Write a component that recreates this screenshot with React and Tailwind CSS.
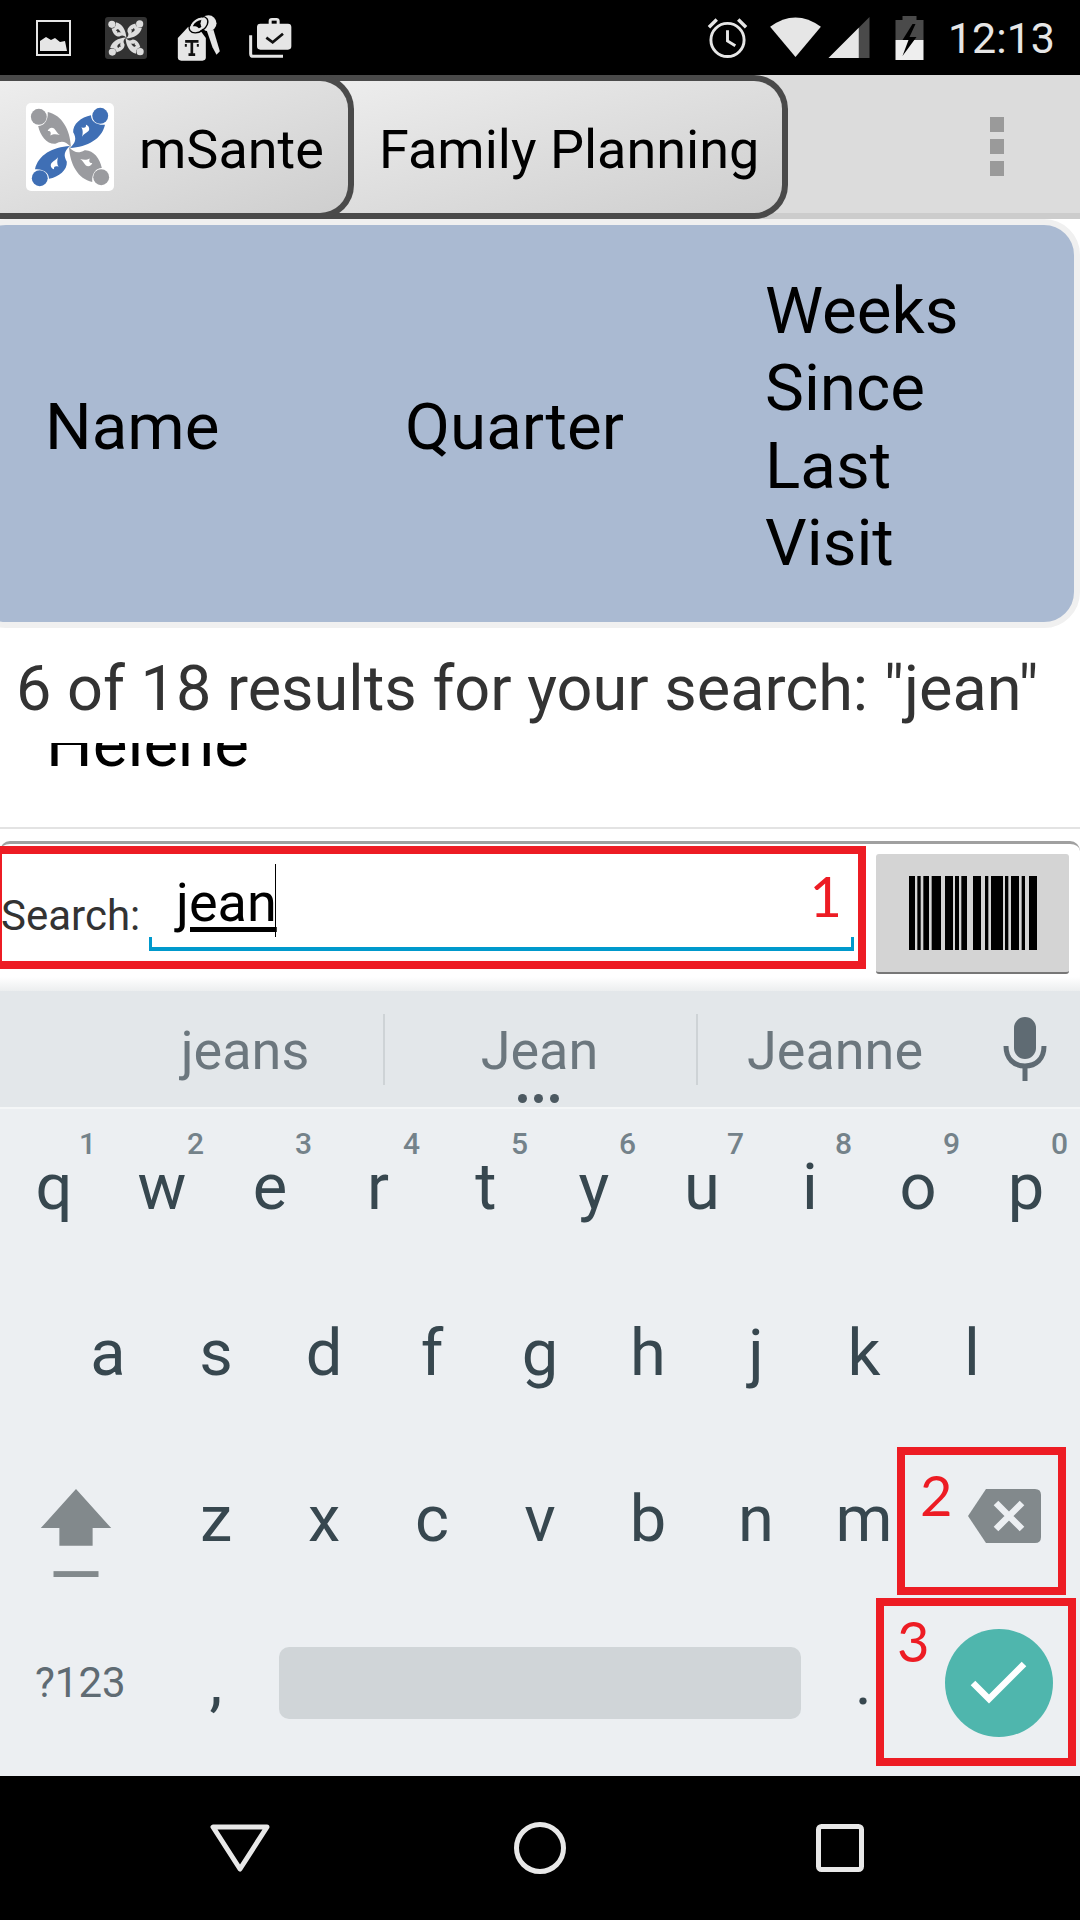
const row1 = [['q', '1'], ['w', '2'], ['e', '3'], ['r', '4'], ['t', '5'], ['y', '6'], ['u', '7'], ['i', '8'], ['o', '9'], ['p', '0']];
const row2 = ['a', 's', 'd', 'f', 'g', 'h', 'j', 'k', 'l'];
const row3 = ['z', 'x', 'c', 'v', 'b', 'n', 'm'];
// start, width of each bar, read off the reference at 3x
const barcode = [[0, 18], [25, 10], [43, 17], [68, 28], [108, 24], [138, 12], [157, 17], [192, 24], [228, 10], [246, 36], [288, 10], [306, 24], [338, 10], [360, 24]];

function Figure({ fill, notch, angle }) {
  return (
    <g transform={`rotate(${angle} 150 150)`}>
      <circle cx="52" cy="55" r="25" fill={fill} />
      <path d="M80 40 C125 50 150 95 153 150 C135 130 122 130 104 140 C78 142 56 115 50 84 C68 84 82 68 80 40Z" fill={fill} />
      <path d="M118 112 C110 108 108 100 100 92 C92 86 82 92 80 100 C88 98 92 104 88 114 C98 108 108 110 118 112Z" fill={notch} />
    </g>
  );
}

function Logo({ className, a, b, notch }) {
  return (
    <svg viewBox="18 18 264 264" className={className}>
      <Figure fill={a} notch={notch} angle={0} />
      <Figure fill={b} notch={notch} angle={90} />
      <Figure fill={a} notch={notch} angle={180} />
      <Figure fill={b} notch={notch} angle={270} />
    </svg>
  );
}

function StatusIcons() {
  return (
    <div className="flex items-center h-[75px] bg-black pl-[36px] pr-[25px] shrink-0">
      <svg viewBox="0 0 35 36" className="w-[35px] h-[36px]">
        <rect x="1" y="1" width="33" height="34" fill="none" stroke="#e6e6e6" strokeWidth="2" />
        <path d="M4 31 V21 L10 17 L15 20 L19 18 L24 22 L29 21 L31 31Z" fill="#e6e6e6" />
      </svg>
      <div className="ml-[34px] w-[42px] h-[42px] rounded-[3px] bg-[#333333] flex items-center justify-center">
        <Logo className="w-[38px] h-[38px]" a="#dddddd" b="#dddddd" notch="#333333" />
      </div>
      <svg viewBox="240 15 140 150" className="ml-[28px] w-[47px] h-[50px]">
        <path d="M248 90 L278 58 Q282 55 288 55 H300 Q306 55 310 60 L332 90 V148 Q332 158 322 158 H258 Q248 158 248 148Z" fill="#e6e6e6" />
        <circle cx="340" cy="46" r="24" fill="#e6e6e6" />
        <path d="M335 68 L355 66 L374 130 L364 140 L352 118Z" fill="#e6e6e6" />
        <ellipse cx="310" cy="50" rx="24" ry="14" transform="rotate(-35 310 50)" fill="none" stroke="#e6e6e6" strokeWidth="7" />
        <ellipse cx="310" cy="50" rx="31" ry="21" transform="rotate(-35 310 50)" fill="none" stroke="#000000" strokeWidth="4" />
        <path d="M270 100 H310 M290 100 V140 M280 140 H300" stroke="#111111" strokeWidth="8" fill="none" />
        <path d="M272 108 V116 M308 108 V116 M272 122 V122" stroke="#111111" strokeWidth="6" fill="none" />
      </svg>
      <svg viewBox="460 30 135 126" className="ml-[26px] w-[45px] h-[42px]">
        <path d="M468 85 V140 Q468 148 476 148 H565" fill="none" stroke="#e6e6e6" strokeWidth="9" />
        <path d="M497 50 H522 V42 Q522 33 532 33 H545 Q555 33 555 42 V50 H580 Q590 50 590 60 V118 Q590 128 580 128 H497 Q487 128 487 118 V60 Q487 50 497 50Z" fill="#e6e6e6" />
        <rect x="531" y="41" width="15" height="9" fill="#000000" />
        <path d="M515 92 L534 106 L565 80" fill="none" stroke="#111111" strokeWidth="8" />
      </svg>
      <div className="flex-1" />
      <svg viewBox="0 0 42 42" className="w-[41px] h-[42px]">
        <circle cx="21" cy="23" r="17" fill="none" stroke="#e6e6e6" strokeWidth="3" />
        <path d="M21 13 V24 L29 29" fill="none" stroke="#e6e6e6" strokeWidth="3" />
        <path d="M2 10 L10 2 M32 2 L40 10" stroke="#e6e6e6" strokeWidth="3.500" />
      </svg>
      <svg viewBox="0 0 52 42" className="ml-[21px] w-[53px] h-[41px]">
        <path d="M0 10 Q26 -9 52 10 L26 41Z" fill="#e6e6e6" />
      </svg>
      <svg viewBox="0 0 42 42" className="ml-[6px] w-[42px] h-[41px]">
        <path d="M0 42 L42 0 V42Z" fill="#4a4a4a" />
        <path d="M0 42 L31 11 V42Z" fill="#e6e6e6" />
      </svg>
      <svg viewBox="0 0 28 44" className="ml-[25px] w-[29px] h-[44px]">
        <path d="M7 0 H21 V4 H28 V24 H0 V4 H7Z" fill="#4a4a4a" />
        <path d="M0 24 H28 V44 H0Z" fill="#eeeeee" />
        <path d="M17 8 L7 24 L13 24 L7 40 L21 21 L14 21 L20 8Z" fill="#000000" />
      </svg>
      <span className="ml-[24px] mt-[2px] text-[43px] leading-none text-[#e6e6e6]">12:13</span>
    </div>
  );
}

function ActionBar() {
  return (
    <div className="flex items-stretch h-[144px] bg-[#dcdcdc] border-b-[6px] border-[#cccccc] shrink-0 relative">
      <div className="relative z-10 -ml-[10px] w-[364px] h-[144px] shrink-0 rounded-r-[34px] border-y-[6px] border-r-[6px] border-[#4a4a4a] bg-gradient-to-br from-[#eeeeee] to-[#cecece] flex items-center pl-[36px]">
        <div className="w-[88px] h-[88px] rounded-[5px] bg-white flex items-center justify-center">
          <Logo className="w-[84px] h-[84px]" a="#9a9b9f" b="#3f6fb5" notch="#ffffff" />
        </div>
        <span className="ml-[25px] pt-[6px] text-[54px] leading-none text-black">mSante</span>
      </div>
      <div className="-ml-[40px] w-[474px] h-[144px] shrink-0 rounded-r-[34px] border-y-[6px] border-r-[6px] border-[#4a4a4a] bg-gradient-to-br from-[#eeeeee] to-[#cecece] flex items-center pl-[65px]">
        <span className="pt-[6px] text-[54px] leading-none text-black whitespace-nowrap">Family Planning</span>
      </div>
      <div className="ml-[202px] pt-[4px] flex flex-col gap-[7px] justify-center">
        <div className="w-[14px] h-[15px] bg-[#9a9a9a]" />
        <div className="w-[14px] h-[15px] bg-[#9a9a9a]" />
        <div className="w-[14px] h-[15px] bg-[#9a9a9a]" />
      </div>
    </div>
  );
}

function TableHeader() {
  return (
    <div className="h-[409px] shrink-0 -ml-[30px] rounded-[36px] border-[6px] border-[#f0f0f0] bg-[#aabad2] flex items-center pl-[69px] pt-[6px] text-[65.500px] leading-[77.500px] text-black">
      <div className="w-[360px]">Name</div>
      <div className="w-[360px]">Quarter</div>
      <div>
        <div>Weeks</div>
        <div>Since</div>
        <div>Last</div>
        <div>Visit</div>
      </div>
    </div>
  );
}

function ResultList() {
  return (
    <div className="h-[201px] shrink-0 bg-white border-b-[2px] border-[#e3e3e3] flex flex-col">
      <div className="h-[115px] pl-[16px] pt-[26px] text-[63px] leading-[70px] text-[#333333] whitespace-nowrap">6 of 18 results for your search: "jean"</div>
      <div className="flex-1 overflow-hidden pl-[46px] text-[65.500px] leading-[70px] text-black">
        <div className="-mt-[34px]">Helene</div>
      </div>
    </div>
  );
}

function SearchPanel() {
  return (
    <div className="h-[162px] shrink-0 bg-white pt-[12px] relative">
      <div className="h-[150px] rounded-t-[10px] border-t-[3px] border-[#a0a0a0] flex items-start relative">
        <div className="w-[876px] h-[120px] flex items-end relative">
          <span className="pl-[1px] pb-[24px] text-[42px] leading-[48px] text-[#333333]">Search:</span>
          <span className="absolute left-[176px] top-[24px] text-[54px] leading-[70px] text-black underline underline-offset-[6px]">jean</span>
          <div className="absolute left-[275px] top-[20px] w-[1px] h-[73px] bg-black" />
          <div className="absolute left-[149px] top-[93px] w-[705px] h-[14px] border-x-[3px] border-b-[4px] border-[#0099cc]" />
        </div>
        <div className="mt-[10px] w-[193px] h-[120px] rounded-[3px] bg-[#d4d4d4] border-b-[2px] border-[#777777] flex items-center justify-center">
          <svg viewBox="0 0 384 222" className="w-[128px] h-[74px]">
            {barcode.map(([x, w]) => (
              <rect key={x} x={x} y="0" width={w} height="222" fill="#000000" />
            ))}
          </svg>
        </div>
      </div>
      <div className="absolute left-0 right-0 bottom-0 h-[14px] bg-gradient-to-b from-white to-[#eceeef]" />
    </div>
  );
}

function Suggestions() {
  return (
    <div className="h-[116px] shrink-0 bg-[#e3e7ea] flex items-center relative text-[54px] leading-none text-[#6c777e]">
      <div className="w-[383px] pl-[107px] pt-[4px] text-center">jeans</div>
      <div className="w-[2px] h-[71px] bg-[#ced3d6]" />
      <div className="w-[311px] pt-[4px] pr-[2px] text-center">Jean</div>
      <div className="w-[2px] h-[71px] bg-[#ced3d6]" />
      <div className="w-[276px] pt-[4px] pr-[2px] text-center">Jeanne</div>
      <svg viewBox="0 0 44 64" className="ml-[29px] w-[44px] h-[64px]">
        <rect x="11" y="0" width="22" height="42" rx="11" fill="#5f6b73" />
        <path d="M3 29 C3 42 11 49 22 49 C33 49 41 42 41 29" fill="none" stroke="#5f6b73" strokeWidth="5" />
        <rect x="19.500" y="48" width="5" height="16" fill="#5f6b73" />
      </svg>
      <div className="absolute left-[518px] top-[103px] flex gap-[7px]">
        <div className="w-[9px] h-[9px] rounded-full bg-[#4c5961]" />
        <div className="w-[9px] h-[9px] rounded-full bg-[#4c5961]" />
        <div className="w-[9px] h-[9px] rounded-full bg-[#4c5961]" />
      </div>
    </div>
  );
}

function Letter({ ch, hint }) {
  return (
    <div className="relative w-[108px] h-[166px] shrink-0 flex items-center justify-center pb-[10px] text-[65px] leading-none text-[#37474f]">
      {ch}
      {hint && <span className="absolute left-[79px] top-[20px] text-[30px] leading-none font-medium text-[#74828a]">{hint}</span>}
    </div>
  );
}

function Keyboard() {
  return (
    <div className="h-[669px] shrink-0 bg-[#eceff2] border-t-[2px] border-[#f4f6f7] flex flex-col">
      <div className="flex">
        {row1.map(([ch, hint]) => <Letter key={ch} ch={ch} hint={hint} />)}
      </div>
      <div className="flex pl-[54px]">
        {row2.map(ch => <Letter key={ch} ch={ch} />)}
      </div>
      <div className="flex">
        <div className="w-[162px] h-[166px] shrink-0 flex items-start pl-[40px] pt-[48px]">
          <svg viewBox="0 0 72 90" className="w-[72px] h-[88px]">
            <path d="M36 0 L72 40 H53 V58 H19 V40 H0Z" fill="#82898c" />
            <rect x="13" y="84" width="46" height="6" fill="#82898c" />
          </svg>
        </div>
        {row3.map(ch => <Letter key={ch} ch={ch} />)}
        <div className="pl-[50px] pt-[48px]">
          <svg viewBox="0 0 73 54" className="w-[73px] h-[54px]">
            <path d="M18 0 H67 Q73 0 73 6 V48 Q73 54 67 54 H18 L0 27Z" fill="#82898c" />
            <path d="M28 14 L54 40 M54 14 L28 40" stroke="#eceff2" strokeWidth="6.500" />
          </svg>
        </div>
      </div>
      <div className="flex items-center flex-1 pb-[18px]">
        <div className="w-[162px] pl-[35px] text-[42px] leading-none text-[#5f6b73]">?123</div>
        <div className="w-[108px] text-center text-[65px] leading-none text-[#37474f]">,</div>
        <div className="ml-[9px] w-[522px] h-[72px] rounded-[10px] bg-[#d0d5d8]" />
        <div className="w-[71px] text-[65px] leading-none text-[#37474f] text-right">.</div>
        <svg viewBox="0 0 108 108" className="ml-[73px] w-[108px] h-[108px]">
          <circle cx="54" cy="54" r="54" fill="#4fb6ad" />
          <path d="M28 54 L44 70 L79 35" fill="none" stroke="#ffffff" strokeWidth="6.500" />
        </svg>
      </div>
    </div>
  );
}

function NavBar() {
  return (
    <div className="flex-1 bg-black flex items-center">
      <svg viewBox="0 0 60 48" className="ml-[210px] w-[60px] h-[48px]">
        <path d="M3 3 H57 L30 45Z" fill="none" stroke="#e8e8e8" strokeWidth="5" strokeLinejoin="round" />
      </svg>
      <svg viewBox="0 0 52 52" className="ml-[244px] w-[52px] h-[52px]">
        <circle cx="26" cy="26" r="23.500" fill="none" stroke="#e8e8e8" strokeWidth="5" />
      </svg>
      <svg viewBox="0 0 48 48" className="ml-[250px] w-[48px] h-[48px]">
        <rect x="2.500" y="2.500" width="43" height="43" rx="3" fill="none" stroke="#e8e8e8" strokeWidth="5" />
      </svg>
    </div>
  );
}

function Callout({ className, num, numClass }) {
  return (
    <div className={`absolute border-[8px] border-[#ed1c24] ${className}`}>
      <span className={`absolute font-['Lato',sans-serif] text-[56px] leading-none text-[#ed1c24] ${numClass}`}>{num}</span>
    </div>
  );
}

export default function App() {
  return (
    <div className="relative w-[1080px] h-[1920px] overflow-hidden bg-white flex flex-col font-['Roboto',sans-serif]">
      <StatusIcons />
      <ActionBar />
      <TableHeader />
      <ResultList />
      <SearchPanel />
      <Suggestions />
      <Keyboard />
      <NavBar />
      <Callout className="left-[-6px] top-[846px] w-[872px] h-[123px]" num="1" numClass="right-[16px] top-[14px]" />
      <Callout className="left-[897px] top-[1447px] w-[169px] h-[148px]" num="2" numClass="left-[15px] top-[12px]" />
      <Callout className="left-[876px] top-[1598px] w-[200px] h-[168px]" num="3" numClass="left-[13px] top-[7px]" />
    </div>
  );
}
